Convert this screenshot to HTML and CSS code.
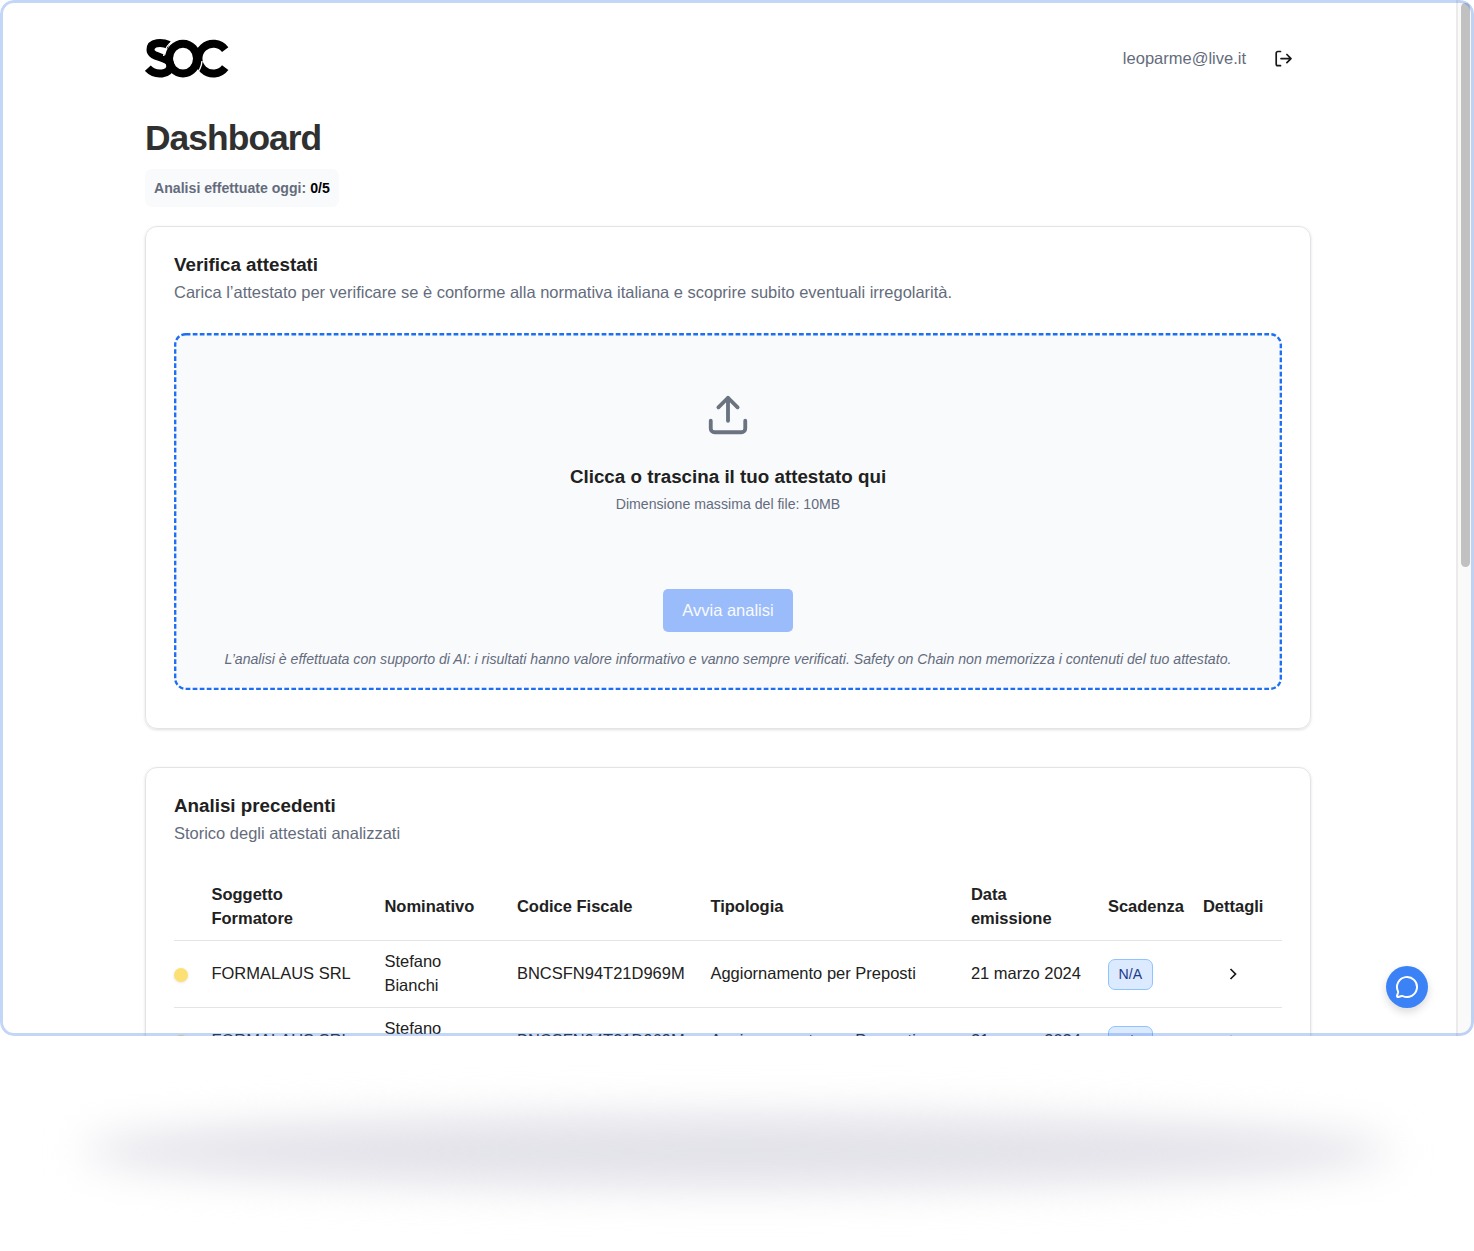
FILE: index.html
```html
<!DOCTYPE html>
<html lang="it">
	<head>
		<meta charset="UTF-8" />
		<meta name="viewport" content="width=device-width, initial-scale=1.0" />
		<title>Dashboard</title>
		<link rel="stylesheet" href="styles.css">
	</head>
	<body>
		<div class="window">
			<div class="page">
				<header class="header">
					<svg class="logo" viewBox="0 0 84 40" fill="none" stroke="#000" stroke-width="8">
						<!-- C, then S, then the O with its white gaps on top -->
						<path d="M80.200 10.600A14.900 14.900 0 1 0 80.200 28.600" />
						<path d="M24 6C17 3 5.500 2.800 5.500 10.800C5.500 19.500 24.500 17 25.500 26C26 36.200 10 37.200 2.800 29.200" />
						<path d="M57 22A18.700 19.900 0 0 1 50 36" stroke="#fff" stroke-width="1.4" />
						<path d="M18.700 17A18.700 19.900 0 0 1 29 1.500" stroke="#fff" stroke-width="1.4" />
						<ellipse cx="38" cy="19.600" rx="14" ry="14.900" />
					</svg>
					<div class="account">
						<span>leoparme@live.it</span>
						<svg class="icon-logout" viewBox="0 0 18 18" fill="none" stroke="#18181b" stroke-width="1.7" stroke-linecap="round" stroke-linejoin="round">
							<path d="M5.500 1.500H2.900a1.700 1.700 0 0 0-1.700 1.700v10.800a1.700 1.700 0 0 0 1.700 1.700H5.500" />
							<path d="M6 8.600H16M11.900 4.500L16 8.600l-4.100 4.100" />
						</svg>
					</div>
				</header>

				<h1>Dashboard</h1>
				<div class="counter">Analisi effettuate oggi: <strong>0/5</strong></div>

				<section class="card">
					<h2>Verifica attestati</h2>
					<p class="description">Carica l’attestato per verificare se è conforme alla normativa italiana e scoprire subito eventuali irregolarità.</p>
					<div class="dropzone">
						<svg class="dropzone-border" viewBox="0 0 1108 357" fill="none" stroke="#1c6ef3" stroke-width="2.35" stroke-dasharray="4.700 2.350">
							<rect x="1.200" y="1.200" width="1105.600" height="354.600" rx="10.500" />
						</svg>
						<svg class="icon-upload" viewBox="0 0 24 24" fill="none" stroke="#6b7280" stroke-width="2" stroke-linecap="round" stroke-linejoin="round">
							<path d="M21 15v4a2 2 0 0 1-2 2H5a2 2 0 0 1-2-2v-4" />
							<path d="M17 8l-5-5-5 5M12 3v12" />
						</svg>
						<h3>Clicca o trascina il tuo attestato qui</h3>
						<p class="limit">Dimensione massima del file: 10MB</p>
						<button class="start" disabled>Avvia analisi</button>
						<p class="note">L’analisi è effettuata con supporto di AI: i risultati hanno valore informativo e vanno sempre verificati. Safety on Chain non memorizza i contenuti del tuo attestato.</p>
					</div>
				</section>

				<section class="card">
					<h2>Analisi precedenti</h2>
					<p class="description">Storico degli attestati analizzati</p>
					<table class="history">
						<colgroup>
							<col class="col-status" />
							<col class="col-trainer" />
							<col class="col-name" />
							<col class="col-code" />
							<col class="col-type" />
							<col class="col-date" />
							<col class="col-expiry" />
							<col class="col-details" />
						</colgroup>
						<thead>
							<tr>
								<th></th>
								<th>Soggetto Formatore</th>
								<th>Nominativo</th>
								<th>Codice Fiscale</th>
								<th>Tipologia</th>
								<th>Data<br />emissione</th>
								<th>Scadenza</th>
								<th>Dettagli</th>
							</tr>
						</thead>
						<tbody>
							<tr>
								<td class="status"><span class="dot"></span></td>
								<td>FORMALAUS SRL</td>
								<td>Stefano Bianchi</td>
								<td>BNCSFN94T21D969M</td>
								<td>Aggiornamento per Preposti</td>
								<td>21 marzo 2024</td>
								<td class="expiry"><span class="tag">N/A</span></td>
								<td class="details">
									<svg class="icon-chevron" viewBox="0 0 8 12" fill="none" stroke="#18181b" stroke-width="1.7">
										<path d="M1.500 1l5 5-5 5" />
									</svg>
								</td>
							</tr>
							<tr>
								<td class="status"><span class="dot"></span></td>
								<td>FORMALAUS SRL</td>
								<td>Stefano Bianchi</td>
								<td>BNCSFN94T21D969M</td>
								<td>Aggiornamento per Preposti</td>
								<td>21 marzo 2024</td>
								<td class="expiry"><span class="tag">N/A</span></td>
								<td class="details">
									<svg class="icon-chevron" viewBox="0 0 8 12" fill="none" stroke="#18181b" stroke-width="1.7">
										<path d="M1.500 1l5 5-5 5" />
									</svg>
								</td>
							</tr>
						</tbody>
					</table>
				</section>
			</div>
			<div class="scrollbar"><div class="thumb"></div></div>

			<button class="chat" aria-label="Chat">
				<svg class="icon-chat" viewBox="0 0 24 24" fill="none" stroke="#fff" stroke-width="2" stroke-linecap="round" stroke-linejoin="round">
					<path d="M2.992 16.342a2 2 0 0 1 .094 1.167l-1.065 3.290a1 1 0 0 0 1.236 1.168l3.413-.998a2 2 0 0 1 1.099.092 10 10 0 1 0-4.777-4.719" />
				</svg>
			</button>
		</div>
		<div class="ground-shadow"></div>
	</body>
</html>
```
FILE: styles.css
```css
:root {
	--text: #212121;
	--muted: #646c7c;
	--border: #e4e4e7;
	--surface: #f9fafc;
}
* {
	box-sizing: border-box;
}
body {
	margin: 0;
	height: 1251px;
	overflow: hidden;
	background: #fff;
	color: var(--text);
	font-family: "Liberation Sans", Arial, sans-serif;
	font-size: 16.5px;
	line-height: 23.6px;
}
h1,
h2,
h3,
p {
	margin: 0;
}
.window {
	position: relative;
	display: flex;
	height: 1036px;
	border-radius: 14px;
	overflow: hidden;
	background: #fff;
}
/* translucent frame, drawn over the clipped content */
.window::after {
	content: "";
	position: absolute;
	inset: 0;
	border: 3px solid rgba(60, 118, 231, 0.3);
	border-radius: 14px;
	pointer-events: none;
}
.page {
	flex: 1;
	padding: 0 145px;
}
.header {
	display: flex;
	align-items: center;
	justify-content: space-between;
	height: 117px;
	padding-right: 18px;
}
.logo {
	width: 84px;
	height: 40px;
}
.account {
	display: flex;
	align-items: center;
	gap: 29px;
	color: var(--muted);
}
.icon-logout {
	width: 18px;
	height: 18px;
}
h1 {
	font-size: 35.4px;
	line-height: 42px;
	letter-spacing: -0.027em;
	color: #303030;
}
.counter {
	display: inline-block;
	height: 37.5px;
	margin: 10px 0 19.5px;
	padding: 0 9px;
	border-radius: 7px;
	background: var(--surface);
	color: var(--muted);
	font-size: 14.14px;
	font-weight: bold;
	line-height: 38.5px;
	vertical-align: top;
}
.counter strong {
	color: #000;
}
.card {
	margin-bottom: 38px;
	padding: 23.5px 28px 38px;
	border: 1px solid var(--border);
	border-radius: 12px;
	box-shadow: 0 1px 3px rgba(0, 0, 0, 0.13);
}
h2,
h3 {
	font-size: 18.8px;
	line-height: 28px;
}
.description {
	margin: 1px 0 29.5px;
	color: var(--muted);
	font-size: 16.48px;
	line-height: 24px;
}
.dropzone {
	position: relative;
	display: flex;
	flex-direction: column;
	align-items: center;
	height: 357px;
	padding-top: 59px;
	border-radius: 12px;
	background: var(--surface);
}
.dropzone-border {
	position: absolute;
	inset: 0;
	width: 100%;
	height: 100%;
}
.icon-upload {
	width: 46px;
	height: 46px;
	margin-bottom: 25px;
}
.limit,
.note {
	color: var(--muted);
	font-size: 14.13px;
	line-height: 20px;
}
.limit {
	margin-top: 3px;
}
.start {
	width: 130px;
	height: 42.5px;
	margin: 75px 0 17.5px;
	padding: 1px 0 0;
	border: 0;
	border-radius: 5px;
	background: #9bbcfb;
	color: #f9fafc;
	font: inherit;
}
.note {
	font-style: italic;
	white-space: nowrap;
}

.history {
	width: 1108px;
	margin-top: -1px;
	table-layout: fixed;
	border-collapse: collapse;
}
.col-status {
	width: 28px;
}
.col-trainer {
	width: 173px;
}
.col-name {
	width: 132.5px;
}
.col-code {
	width: 193.5px;
}
.col-type {
	width: 260.5px;
}
.col-date {
	width: 137px;
}
.col-expiry {
	width: 95px;
}
.history th,
.history td {
	height: 67px;
	padding: 9px 9.4px;
	border-bottom: 1px solid var(--border);
	text-align: left;
	vertical-align: middle;
}
.history th {
	padding-top: 10px;
}
.history th:nth-child(2) {
	padding-right: 60px;
}
.history td:nth-child(3) {
	padding-right: 40px;
}
.history .status {
	padding: 3px 0 0;
}
.history .expiry {
	padding-top: 11px;
}
.history .details {
	padding-right: 19px;
	text-align: center;
}
.dot {
	display: block;
	width: 14px;
	height: 14px;
	border-radius: 50%;
	background: #fde073;
	box-shadow: 0 1px 3px rgba(0, 0, 0, 0.1);
}
.tag {
	display: block;
	width: 45px;
	height: 31px;
	border: 1px solid #8ec5ff;
	border-radius: 7px;
	background: #dbeafe;
	color: #1c398e;
	font-size: 14.14px;
	line-height: 29px;
	text-align: center;
}
.icon-chevron {
	width: 8px;
	height: 12px;
	vertical-align: middle;
}

.scrollbar {
	width: 18px;
	padding: 3px 4px 0 3px;
	border-left: 2px solid #ebebeb;
	background: #fafafa;
}
.thumb {
	width: 9px;
	height: 564px;
	border-radius: 5px;
	background: #c1c1c1;
}
.chat {
	position: absolute;
	right: 46px;
	bottom: 28px;
	display: flex;
	align-items: center;
	justify-content: center;
	width: 42.5px;
	height: 42.5px;
	padding: 0;
	border: 0;
	border-radius: 50%;
	background: #3b82f6;
	box-shadow: 0 4px 8px rgba(0, 0, 0, 0.15);
}
.icon-chat {
	width: 24px;
	height: 24px;
}
.ground-shadow {
	width: 1310px;
	height: 74px;
	margin: 78px auto 0;
	border-radius: 50%;
	background: #e2e2e9;
	filter: blur(20px);
}
```
